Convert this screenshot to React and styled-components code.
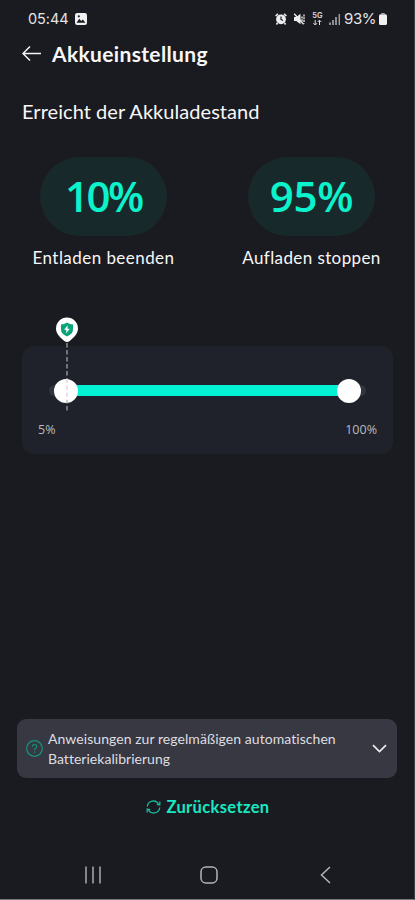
import styled, { createGlobalStyle } from 'styled-components';

const GlobalStyle = createGlobalStyle`
  * {
    box-sizing: border-box;
  }

  body {
    margin: 0;
    background: #1a1b20;
  }
`;

export const Screen = styled.main`
  display: flex;
  flex-direction: column;
  width: 415px;
  height: 900px;
  overflow: hidden;
  color: #f7f7f8;
  background: #1a1b20;
  border-right: 1px solid #3d3e43;
  border-bottom: 1px solid #77787b;
  font-family: Lato, 'Liberation Sans', sans-serif;
  white-space: nowrap;

  svg {
    display: block;
    flex: none;
  }
`;

export const StatusBar = styled.div`
  display: flex;
  justify-content: space-between;
  height: 38px;
  padding: 0 27px 0 28px;
  color: #e4e4e6;
  font-family: Inter, sans-serif;
  font-size: 14.5px;
  line-height: 38px;
`;

export const StatusGroup = styled.div`
  display: flex;
  align-items: center;
`;

export const StatusIcons = styled.div`
  display: flex;
  align-items: center;
  gap: 6px;
`;

export const Clock = styled.span`
  width: 47px;
  letter-spacing: -0.05px;
`;

export const Percent = styled.span`
  width: 35px;
  margin-left: 3px;
  font-size: 15px;
  letter-spacing: -0.4px;
`;

export const Header = styled.header`
  display: flex;
  align-items: center;
  height: 31px;
  padding-left: 22px;
`;

export const Title = styled.h1`
  margin: 0 0 0 11px;
  font-size: 21px;
  font-weight: 700;
  line-height: 31px;
  letter-spacing: 0.35px;
`;

export const Subtitle = styled.h2`
  margin: 27px 0 0 22px;
  font-size: 20px;
  font-weight: 400;
  line-height: 30px;
  letter-spacing: 0.05px;
`;

export const Limits = styled.section`
  display: flex;
  justify-content: space-between;
  margin-top: 31px;
  padding: 0 28px 0 29px;
`;

export const Limit = styled.div`
  display: flex;
  flex-direction: column;
  align-items: center;
  width: 149px;
`;

export const Pill = styled.div`
  width: 127px;
  height: 79px;
  border-radius: 40px;
  background: #18292b;
  color: #0bf3cc;
  font-family: 'Open Sans', sans-serif;
  font-size: 42px;
  font-weight: 600;
  line-height: 77px;
  text-align: center;
  letter-spacing: ${({ $spacing }) => $spacing};
`;

export const LimitLabel = styled.span`
  margin-top: 11px;
  font-size: 17px;
  line-height: 22px;
  letter-spacing: ${({ $spacing }) => $spacing};
`;

export const SliderCard = styled.section`
  position: relative;
  height: 108px;
  margin: 77px 21px 0 22px;
  padding: 39px 27px 0;
  border-radius: 12px;
  background: #20222b;
`;

export const Track = styled.div`
  display: flex;
  align-items: center;
  height: 11px;
  border-radius: 6px;
  background: #33353d;
`;

export const Range = styled.div`
  display: flex;
  align-items: center;
  justify-content: space-between;
  flex: 1;
  height: 11px;
  margin: 0 17px;
  background: #03f2d5;
`;

export const Thumb = styled.div`
  width: 24px;
  height: 24px;
  margin: 0 -12px;
  border-radius: 50%;
  background: #fff;
`;

export const Marker = styled.div`
  position: absolute;
  top: -31px;
  left: 32px;
`;

export const Scale = styled.div`
  display: flex;
  justify-content: space-between;
  margin: 24px -11px 0;
  color: #b9babf;
  font-family: 'Open Sans', sans-serif;
  font-size: 12.5px;
  line-height: 20px;
`;

export const Hint = styled.button`
  display: flex;
  align-items: center;
  height: 59px;
  margin: 265px 17px 0 17px;
  padding: 0 10px 0 9px;
  border: 0;
  border-radius: 9px;
  background: #373841;
  color: #dedee1;
  font: 400 14px/20px Lato, sans-serif;
  text-align: left;
`;

export const HintText = styled.span`
  flex: 1;
  margin-left: 5px;
`;

export const HintLine = styled.span`
  display: block;
  letter-spacing: ${({ $spacing }) => $spacing};
`;

export const Reset = styled.button`
  display: flex;
  align-items: center;
  align-self: center;
  gap: 5px;
  height: 24px;
  margin: 17px 0 0 2px;
  padding: 0;
  border: 0;
  background: none;
  color: #18e9c2;
  font: 700 16.5px/24px Lato, sans-serif;
  letter-spacing: 0.35px;
`;

export const NavBar = styled.nav`
  display: flex;
  align-items: center;
  gap: 98px;
  height: 48px;
  margin-top: auto;
  padding-left: 84px;
`;

const PhotoIcon = () => (
  <svg width="12" height="12" viewBox="0 0 12 12">
    <rect width="12" height="12" rx="2.2" fill="#f1f1f2" />
    <path d="M1.5 9.8 4.3 5.8 6.2 8 7.8 6.5 10.5 9.8Z" fill="#1a1b20" />
    <circle cx="3.8" cy="3.3" r="1.1" fill="#1a1b20" />
  </svg>
);

const AlarmIcon = () => (
  <svg width="12" height="12" viewBox="0 0 12 12">
    <circle cx="6" cy="6.3" r="4.9" fill="#ececee" />
    <path d="M.6 3 3 .9M11.4 3 9 .9M2.5 10 1.4 11.4M9.5 10l1.1 1.4" stroke="#ececee" strokeWidth="1.6" />
    <path d="M6 3.5v3l2 1" fill="none" stroke="#1a1b20" strokeWidth="1.2" />
  </svg>
);

const MuteIcon = () => (
  <svg width="13" height="12" viewBox="0 0 13 12">
    <path d="M1 4h2.3L7.5.8v10.4L3.3 8H1Z" fill="#ececee" />
    <path d="M9 3.5v5M11 1.5v9" stroke="#d3d3d6" strokeWidth="1.5" strokeDasharray="2 .8" />
    <path d="m1.2.7 9.4 10.6" stroke="#ececee" strokeWidth="1.3" />
  </svg>
);

const NetworkIcon = () => (
  <svg width="11" height="14" viewBox="0 0 11 14">
    <text x="0.3" y="6.3" fill="#dedee0" fontFamily="Inter, sans-serif" fontSize="7.4" fontWeight="600">
      5G
    </text>
    <path d="M3.2 8v4.8M1.4 11.2l1.8 1.8L5 11.2M7.5 13V8.2M5.7 10l1.8-1.8L9.3 10" fill="none" stroke="#dedee0" />
  </svg>
);

const SignalIcon = () => (
  <svg width="12" height="12" viewBox="0 0 12 12">
    <path d="M1 9.5V12M4 7v5M7 4v8" stroke="#bcbcc0" strokeWidth="1.4" />
    <path d="M10.3 1v11" stroke="#a0a0a4" strokeWidth="1.4" />
  </svg>
);

const BatteryIcon = () => (
  <svg width="8" height="12" viewBox="0 0 8 12">
    <rect y="1.3" width="8" height="10.7" rx="1.6" fill="#f1f1f2" />
    <rect x="2.2" width="3.6" height="2" rx=".6" fill="#b0b0b3" />
  </svg>
);

const BackArrow = () => (
  <svg width="19" height="16" viewBox="0 0 19 16">
    <path d="M8 .5 1 7.5l7 7M1 7.5h18" fill="none" stroke="#f4f4f5" strokeWidth="1.5" />
  </svg>
);

const ShieldMarker = () => (
  <svg width="26" height="98" viewBox="0 0 26 98">
    <path d="M13 28v69" stroke="#a9abb2" strokeWidth="1.2" strokeDasharray="4.5 2.5" />
    <path d="M13 64v21" stroke="#fff" strokeWidth="1.4" />
    <path d="M13 64v21" stroke="#ead8e4" strokeWidth="1.2" strokeDasharray="4 3" />
    <path
      d="M13 2.5a11 11 0 0 1 11 11c0 5.5-4.5 9-8 12.2q-3 2.6-6 0C6.5 22.5 2 19 2 13.5a11 11 0 0 1 11-11Z"
      fill="#fff"
    />
    <path d="M13 7.6q3 2 6 2v5q0 4.500-6 6.9-6-2.4-6-6.9v-5q3 0 6-2Z" fill="#0ba37a" />
    <path d="m13.8 10.3-3.7 4.5h2.3l-.5 3.6 3.9-4.7h-2.4Z" fill="#fff" />
  </svg>
);

const HelpIcon = () => (
  <svg width="17" height="17" viewBox="0 0 17 17" fill="none" stroke="#14957e">
    <circle cx="8.5" cy="8.5" r="7.8" strokeWidth="1.2" />
    <path d="M6.3 6.7q0-2.2 2.2-2.2t2.2 2c0 1.6-2.2 1.7-2.2 3.7M8.5 11.5v1.3" strokeWidth="1.2" />
  </svg>
);

const ChevronDown = () => (
  <svg width="15" height="9" viewBox="0 0 15 9">
    <path d="m1 1.2 6.5 6.3L14 1.2" fill="none" stroke="#ececee" strokeWidth="1.7" />
  </svg>
);

const RefreshIcon = () => (
  <svg width="15" height="14" viewBox="0 0 15 14" fill="none" stroke="#16b99b" strokeWidth="1.3">
    <path d="M1.3 6.5a6 6 0 0 1 11.4-2M13.7 7.5a6 6 0 0 1-11.4 2" />
    <path d="M13.8 1.5V5l-3-.6M1.2 12.5V9l3 .6" />
  </svg>
);

const RecentsIcon = () => (
  <svg width="18" height="18" viewBox="0 0 18 18">
    <path d="M2 .5v17M9 .5v17M16 .5v17" stroke="#b4b4b8" strokeWidth="1.4" />
  </svg>
);

const HomeIcon = () => (
  <svg width="18" height="18" viewBox="0 0 18 18">
    <rect x="1" y="1" width="16" height="16" rx="4.8" fill="none" stroke="#b4b4b8" strokeWidth="1.5" />
  </svg>
);

const BackIcon = () => (
  <svg width="18" height="18" viewBox="0 0 18 18">
    <path d="M14 1 5.500 9l8.500 8" fill="none" stroke="#b4b4b8" strokeWidth="1.5" />
  </svg>
);

export default function App() {
  return (
    <>
      <GlobalStyle />
      <Screen>
        <StatusBar>
          <StatusGroup>
            <Clock>05:44</Clock>
            <PhotoIcon />
          </StatusGroup>
          <StatusGroup>
            <StatusIcons>
              <AlarmIcon />
              <MuteIcon />
              <NetworkIcon />
              <SignalIcon />
            </StatusIcons>
            <Percent>93%</Percent>
            <BatteryIcon />
          </StatusGroup>
        </StatusBar>
        <Header>
          <BackArrow />
          <Title>Akkueinstellung</Title>
        </Header>
        <Subtitle>Erreicht der Akkuladestand</Subtitle>
        <Limits>
          <Limit>
            <Pill $spacing="-2.5px">10%</Pill>
            <LimitLabel $spacing="0.45px">Entladen beenden</LimitLabel>
          </Limit>
          <Limit>
            <Pill $spacing="-0.3px">95%</Pill>
            <LimitLabel $spacing="0.4px">Aufladen stoppen</LimitLabel>
          </Limit>
        </Limits>
        <SliderCard>
          <Track>
            <Range>
              <Thumb />
              <Thumb />
            </Range>
          </Track>
          <Marker>
            <ShieldMarker />
          </Marker>
          <Scale>
            <span>5%</span>
            <span>100%</span>
          </Scale>
        </SliderCard>
        <Hint>
          <HelpIcon />
          <HintText>
            <HintLine $spacing="0.06px">Anweisungen zur regelmäßigen automatischen</HintLine>
            <HintLine $spacing="0.03px">Batteriekalibrierung</HintLine>
          </HintText>
          <ChevronDown />
        </Hint>
        <Reset>
          <RefreshIcon />
          Zurücksetzen
        </Reset>
        <NavBar>
          <RecentsIcon />
          <HomeIcon />
          <BackIcon />
        </NavBar>
      </Screen>
    </>
  );
}
